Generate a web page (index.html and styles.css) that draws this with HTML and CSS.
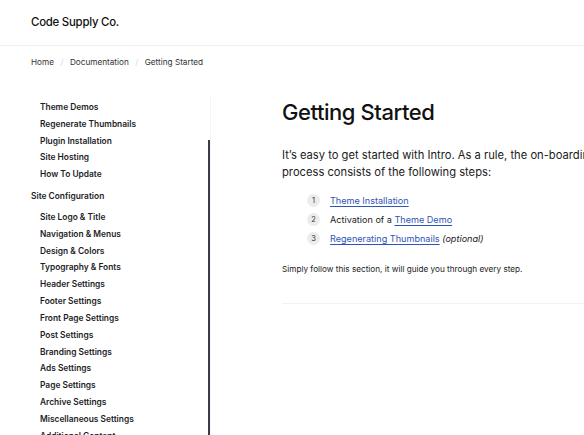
FILE: index.html
```html
<!DOCTYPE html>
<html lang="en">
<head>
<meta charset="utf-8">
<title>Getting Started – Code Supply Co.</title>
<link rel="stylesheet" href="styles.css">
</head>
<body>
<header class="site-header">
  <div class="logo">Code Supply Co.</div>
</header>
<nav class="breadcrumb">
  <a href="#">Home</a><span class="sep">/</span><a href="#">Documentation</a><span class="sep">/</span><span class="current">Getting Started</span>
</nav>
<div class="layout">
  <aside class="sidebar">
    <div class="sidebar-list">
      <ul class="sub">
        <li>Theme Demos</li>
        <li>Regenerate Thumbnails</li>
        <li>Plugin Installation</li>
        <li>Site Hosting</li>
        <li>How To Update</li>
      </ul>
      <div class="group-title">Site Configuration</div>
      <ul class="sub">
        <li>Site Logo &amp; Title</li>
        <li>Navigation &amp; Menus</li>
        <li>Design &amp; Colors</li>
        <li>Typography &amp; Fonts</li>
        <li>Header Settings</li>
        <li>Footer Settings</li>
        <li>Front Page Settings</li>
        <li>Post Settings</li>
        <li>Branding Settings</li>
        <li>Ads Settings</li>
        <li>Page Settings</li>
        <li>Archive Settings</li>
        <li>Miscellaneous Settings</li>
        <li>Additional Content</li>
      </ul>
    </div>
    <div class="scrollbar"><div class="thumb"></div></div>
  </aside>
  <main class="content">
    <h1>Getting Started</h1>
    <p class="lead">It’s easy to get started with Intro. As a rule, the on-boarding process consists of the following steps:</p>
    <ol class="steps">
      <li><span class="num">1</span><a href="#">Theme Installation</a></li>
      <li><span class="num">2</span><span>Activation of a <a href="#">Theme Demo</a></span></li>
      <li><span class="num">3</span><span><a href="#">Regenerating Thumbnails</a> <em>(optional)</em></span></li>
    </ol>
    <p class="note">Simply follow this section, it will guide you through every step.</p>
    <hr class="divider">
  </main>
</div>
</body>
</html>
```

FILE: styles.css
```css
html, body {
  margin: 0;
  padding: 0;
  background: #fff;
  overflow: hidden;
}
body {
  font-family: Inter, "Noto Sans", sans-serif;
  color: #111;
  width: 584px;
  height: 435px;
}
a { color: inherit; text-decoration: none; }

.site-header {
  height: 45px;
  border-bottom: 1px solid #f1f1f1;
  display: flex;
  align-items: center;
  padding: 0 31px;
}
.logo {
  font-size: 11.4px;
  font-weight: 500;
  letter-spacing: -0.02em;
  color: #111;
  margin-top: -1px;
}

.breadcrumb {
  display: flex;
  align-items: center;
  height: 32px;
  padding: 0 31px;
  font-size: 8.2px;
  color: #333;
}
.breadcrumb .sep {
  color: #d6d6d6;
  margin: 0 6.5px;
}

.layout {
  display: flex;
  align-items: flex-start;
  margin-top: 18px;
  width: 900px;
}

.sidebar {
  width: 180px;
  margin-left: 31px;
  display: flex;
  flex-shrink: 0;
}
.sidebar-list {
  flex: 1;
  padding-top: 3px;
}
.sidebar ul {
  list-style: none;
  margin: 0;
  padding: 0 0 0 9px;
}
.sidebar li, .group-title {
  font-size: 8.4px;
  font-weight: 600;
  line-height: 16.83px;
  color: #1d1d1f;
  white-space: nowrap;
}
.group-title {
  margin: 5px 0 4px;
}
.scrollbar {
  width: 3px;
  height: 345px;
  display: flex;
  justify-content: flex-end;
  padding-top: 44px;
  box-sizing: border-box;
  border-right: 1px solid #f4f4f4;
}
.thumb {
  width: 2px;
  height: 100%;
  background: #3b3b4a;
}

.content {
  margin-left: 71px;
  width: 420px;
  flex-shrink: 0;
}
.content h1 {
  font-size: 22px;
  font-weight: 500;
  letter-spacing: -0.02em;
  margin: 2px 0 0;
  line-height: 28px;
  color: #111;
}
.lead {
  font-size: 11.2px;
  line-height: 17px;
  margin: 21px 0 0;
  max-width: 330px;
  color: #1a1a1a;
}
.steps {
  list-style: none;
  margin: 10px 0 0;
  padding: 0 0 0 25px;
}
.steps li {
  display: flex;
  align-items: center;
  height: 19px;
  line-height: 19px;
  font-size: 9.1px;
  color: #1a1a1a;
}
.num {
  width: 13px;
  height: 13px;
  line-height: 13px;
  border-radius: 50%;
  background: #ececec;
  color: #333;
  font-size: 7.5px;
  display: flex;
  align-items: center;
  justify-content: center;
  margin-right: 10px;
  flex-shrink: 0;
}
.steps a {
  color: #2f55b5;
  text-decoration: underline;
  text-underline-offset: 1.5px;
}
.steps em { font-style: italic; }
.note {
  font-size: 8.2px;
  line-height: 12px;
  margin: 15px 0 0;
  color: #222;
}
.divider {
  border: 0;
  border-top: 1px solid #f2f2f2;
  margin: 28px 0 0;
}
```
